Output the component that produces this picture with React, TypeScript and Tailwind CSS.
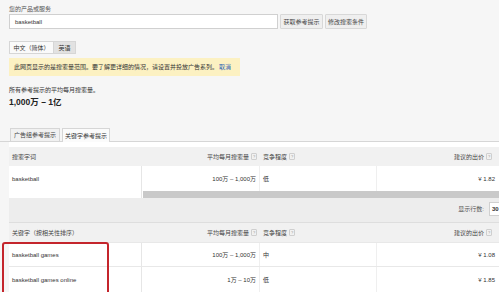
import React from "react";

function Help() {
  return (
    <span className="ml-[2px] inline-flex items-center justify-center w-[6px] h-[7px] border border-[#cfcfcf] rounded-[1px] text-[4px] text-[#999] leading-none">
      ?
    </span>
  );
}

function HeaderRow({ first, top }: { first: string; top?: boolean }) {
  return (
    <div
      className={
        "flex bg-[#f1f1f1] text-[#444] " +
        (top ? "h-[20px] border-t border-[#dedede]" : "h-[19px]")
      }
    >
      <div className="w-[133px] flex items-center pl-[3px]">{first}</div>
      <div className="w-[118px] flex items-center justify-end pr-[3px]">
        平均每月搜索量
        <Help />
      </div>
      <div className="w-[117px] flex items-center pl-[3px]">
        竞争程度
        <Help />
      </div>
      <div className="flex-1 flex items-center justify-end pr-[7px]">
        建议的出价
        <Help />
      </div>
    </div>
  );
}

function DataRow({
  kw,
  vol,
  comp,
  bid,
  h,
}: {
  kw: string;
  vol: string;
  comp: string;
  bid: string;
  h: string;
}) {
  return (
    <div className={"flex bg-white " + h}>
      <div className="w-[133px] flex items-center pl-[3px] border-r border-[#e6e6e6]">{kw}</div>
      <div className="w-[118px] flex items-center justify-end pr-[3px] border-r border-[#efefef]">
        {vol}
      </div>
      <div className="w-[117px] flex items-center pl-[3px] border-r border-[#efefef]">{comp}</div>
      <div className="flex-1 flex items-center justify-end pr-[4px]">{bid}</div>
    </div>
  );
}

export default function App() {
  return (
    <div className="relative w-[499px] h-[292px] overflow-hidden bg-[#f6f6f6] text-[#333] text-[6px] leading-none font-['Liberation_Sans','Noto_Sans_CJK_SC',sans-serif]">
      <div className="flex flex-col">
        <div className="pl-[9px] pt-[4px] flex flex-col">
          <div className="h-[10px] flex items-center text-[#555]">您的产品或服务</div>
          <div className="h-[15px] flex gap-[2px]">
            <div className="w-[269px] h-full bg-white border border-[#d0d0d0] flex items-center pl-[5px]">
              basketball
            </div>
            <div className="w-[43px] h-full bg-[#efefef] border border-[#d8d8d8] rounded-[1px] flex items-center justify-center text-[#444]">
              获取参考提示
            </div>
            <div className="w-[42px] h-full bg-[#efefef] border border-[#d8d8d8] rounded-[1px] flex items-center justify-center text-[#444]">
              修改搜索条件
            </div>
          </div>
          <div className="mt-[12px] h-[13px] flex">
            <div className="w-[45px] h-full border border-[#d6d6d6] bg-[#fafafa] flex items-center justify-center">
              中文（简体）
            </div>
            <div className="w-[22px] h-full border border-l-0 border-[#d6d6d6] bg-[#e2e2e2] flex items-center justify-center">
              英语
            </div>
          </div>
          <div className="mt-[4px] h-[18px] w-[231px] bg-[#fcf1c2] flex items-center pl-[5px] text-[#333]">
            此网页显示的是搜索量范围。要了解更详细的情况，请设置并投放广告系列。
            <span className="text-[#2b5fb3] ml-[1px]">取消</span>
          </div>
          <div className="mt-[9px] h-[10px] flex items-center">所有参考提示的平均每月搜索量。</div>
          <div className="h-[14px] flex items-center text-[8.5px] font-bold text-[#222]">
            1,000万 – 1亿
          </div>
        </div>

        <div className="mt-[19px] h-[14px] border-b border-[#d6d6d6] flex items-end pl-[10px] gap-[2px]">
          <div className="w-[50px] h-[13px] border border-b-0 border-[#d6d6d6] bg-[#f1f1f1] flex items-center justify-center text-[#444]">
            广告组参考提示
          </div>
          <div className="w-[48px] h-[14px] -mb-px border border-b-0 border-[#d6d6d6] bg-[#fbfbfb] flex items-center justify-center text-[#333]">
            关键字参考提示
          </div>
        </div>

        <div className="ml-[9px] bg-white pt-[5px] flex flex-col">
          <HeaderRow first="搜索字词" />
          <DataRow kw="basketball" vol="100万 – 1,000万" comp="低" bid="¥ 1.82" h="h-[25px]" />
          <div className="h-[7px] flex">
            <div className="w-[133px] bg-white border-r border-[#e6e6e6]" />
            <div className="flex-1 ml-[1px] bg-[#c9c9c9]" />
          </div>
          <div className="h-[24px] bg-[#ededed] flex justify-end items-start pt-[4px]">
            <div className="h-[14px] flex items-center text-[#555] mr-[5px]">显示行数:</div>
            <div className="w-[16px] h-[14px] -mr-[6px] bg-white border border-[#d0d0d0] flex items-center pl-[2px] font-bold text-[#333]">
              30
            </div>
          </div>
          <HeaderRow first="关键字（按相关性排序）" top />
          <div className="border-t border-[#e8e8e8]">
            <DataRow kw="basketball games" vol="100万 – 1,000万" comp="中" bid="¥ 1.08" h="h-[23px]" />
          </div>
          <div className="border-t border-[#e8e8e8]">
            <DataRow kw="basketball games online" vol="1万 – 10万" comp="低" bid="¥ 1.85" h="h-[25px]" />
          </div>
        </div>
      </div>

      <div className="absolute left-[2px] top-[242px] w-[107px] h-[60px] border-2 border-[#c4252c] rounded-[3px]" />
    </div>
  );
}
